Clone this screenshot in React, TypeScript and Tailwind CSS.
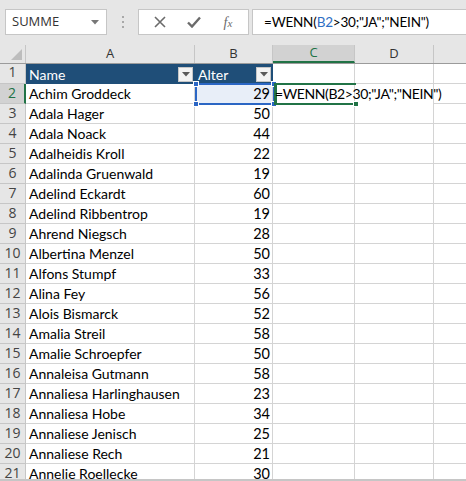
import React from 'react'

const rows: [string, number][] = [
  ['Achim Groddeck', 29],
  ['Adala Hager', 50],
  ['Adala Noack', 44],
  ['Adalheidis Kroll', 22],
  ['Adalinda Gruenwald', 19],
  ['Adelind Eckardt', 60],
  ['Adelind Ribbentrop', 19],
  ['Ahrend Niegsch', 28],
  ['Albertina Menzel', 50],
  ['Alfons Stumpf', 33],
  ['Alina Fey', 56],
  ['Alois Bismarck', 52],
  ['Amalia Streil', 58],
  ['Amalie Schroepfer', 50],
  ['Annaleisa Gutmann', 58],
  ['Annaliesa Harlinghausen', 23],
  ['Annaliesa Hobe', 34],
  ['Annaliese Jenisch', 25],
  ['Annaliese Rech', 21],
  ['Annelie Roellecke', 30],
]

const cellFont = { fontFamily: 'Lato, "Open Sans", sans-serif' }

function FilterButton() {
  return (
    <div className="flex h-[15px] w-[15px] items-center justify-center border border-[#c6c6c6] bg-[#f3f3f3]">
      <svg width="8" height="5" viewBox="0 0 8 5">
        <path d="M0 0 L8 0 L4 4.5 Z" fill="#5a5a5a" />
      </svg>
    </div>
  )
}

function Handle({ className }: { className: string }) {
  return <div className={`absolute h-[6px] w-[6px] border border-white bg-[#2b66c4] ${className}`} />
}

export default function App() {
  return (
    <div className="relative h-[481px] w-[466px] overflow-hidden bg-white" style={{ fontFamily: '"Segoe UI", "Open Sans", sans-serif' }}>
      {/* formula bar area */}
      <div className="flex h-[45px] items-start bg-[#e6e6e6] pl-[5px] pt-[9px]">
        <div className="flex h-[26px] w-[102px] items-center justify-between border border-[#c6c6c6] bg-white pl-[6px] pr-[7px]">
          <span className="text-[13px] text-[#333]" style={{ fontFamily: '"Open Sans", sans-serif' }}>SUMME</span>
          <svg width="8" height="5" viewBox="0 0 8 5">
            <path d="M0 0 L8 0 L4 4.5 Z" fill="#777" />
          </svg>
        </div>
        <div className="flex h-[26px] w-[31px] flex-col items-center justify-center gap-[3px]">
          <div className="h-[2px] w-[2px] bg-[#a8a8a8]" />
          <div className="h-[2px] w-[2px] bg-[#a8a8a8]" />
          <div className="h-[2px] w-[2px] bg-[#a8a8a8]" />
        </div>
        <div className="flex h-[26px] w-[111px] items-center border border-[#c6c6c6] bg-white">
          <div className="flex w-[40px] justify-center pl-[2px]">
            <svg width="12" height="12" viewBox="0 0 12 12">
              <path d="M1 1 L11 11 M11 1 L1 11" stroke="#6b6b6b" strokeWidth="1.6" />
            </svg>
          </div>
          <div className="flex w-[30px] justify-center">
            <svg width="14" height="12" viewBox="0 0 14 12">
              <path d="M1 6.5 L5 10.5 L13 1.5" stroke="#6b6b6b" strokeWidth="2.4" fill="none" />
            </svg>
          </div>
          <div className="flex w-[38px] justify-center">
            <span className="text-[14px] italic text-[#6b6b6b]" style={{ fontFamily: '"Liberation Serif", serif' }}>
              f<span className="text-[11px]">x</span>
            </span>
          </div>
        </div>
        <div className="ml-[3px] flex h-[26px] flex-1 items-center border border-r-0 border-[#c6c6c6] bg-white pl-[11px]">
          <span className="text-[13.5px] tracking-[-0.2px] text-black" style={cellFont}>
            =WENN(<span className="text-[#2e6fc4]">B2</span>&gt;30;"JA";"NEIN")
          </span>
        </div>
      </div>

      {/* column headers */}
      <div className="flex h-[19px] border-b border-[#9b9b9b] bg-[#e6e6e6] text-[13px] text-[#333]">
        <div className="relative w-[26px] border-r border-[#c6c6c6]">
          <svg className="absolute bottom-[3px] right-[3px]" width="11" height="11" viewBox="0 0 11 11">
            <path d="M11 0 L11 11 L0 11 Z" fill="#bdbdbd" />
          </svg>
        </div>
        <div className="flex w-[169px] items-center justify-center border-r border-[#c6c6c6]">A</div>
        <div className="flex w-[78px] items-center justify-center border-r border-[#c6c6c6]">B</div>
        <div className="flex w-[82px] items-center justify-center border-r border-[#c6c6c6] border-b-2 border-b-[#217346] bg-[#d2d2d2] text-[#217346]">C</div>
        <div className="flex w-[79px] items-center justify-center border-r border-[#c6c6c6]">D</div>
        <div className="flex-1" />
      </div>

      {/* grid */}
      <div className="relative" style={cellFont}>
        {/* header row 1 */}
        <div className="flex h-[20px] text-[14px]">
          <div className="flex w-[26px] items-end justify-center border-r border-b border-[#c6c6c6] bg-[#e6e6e6] pb-[1px] text-[14px] text-[#444]" style={{ fontFamily: '"Open Sans", sans-serif' }}>1</div>
          <div className="flex w-[169px] items-center justify-between bg-[#1f4e78] pl-[3px] pr-[2px] text-white">
            <span>Name</span>
            <FilterButton />
          </div>
          <div className="flex w-[78px] items-center justify-between bg-[#1f4e78] pl-[3px] pr-[2px] text-white">
            <span>Alter</span>
            <FilterButton />
          </div>
          <div className="w-[82px] border-r border-b border-[#d4d4d4]" />
          <div className="w-[79px] border-r border-b border-[#d4d4d4]" />
          <div className="flex-1 border-b border-[#d4d4d4]" />
        </div>

        {rows.map(([name, age], i) => {
          const n = i + 2
          const active = n === 2
          return (
            <div key={n} className="flex h-[20px] text-[14px] leading-[18px] text-black">
              <div
                className={`flex w-[26px] items-end justify-center border-b border-[#c6c6c6] pb-[1px] text-[14px] ${active ? 'border-r-2 border-r-[#217346] bg-[#d2d2d2] text-[#217346]' : 'border-r border-r-[#c6c6c6] bg-[#e6e6e6] text-[#444]'}`}
                style={{ fontFamily: '"Open Sans", sans-serif' }}
              >
                {n}
              </div>
              <div className="flex w-[169px] items-end border-r border-b border-[#d4d4d4] pl-[3px]">{name}</div>
              <div className={`flex w-[78px] items-end justify-end border-r border-b border-[#d4d4d4] pr-[2px] text-[14.5px] ${active ? 'bg-[#e8eef8]' : ''}`}>{age}</div>
              <div className="flex w-[82px] items-end overflow-visible whitespace-nowrap border-r border-b border-[#d4d4d4] pl-[2px]">
                {active && <span className="relative z-10 tracking-[-0.4px]">=WENN(B2&gt;30;"JA";"NEIN")</span>}
              </div>
              <div className={`w-[79px] border-r ${active ? '' : 'border-b'} border-[#d4d4d4]`} />
              <div className="flex-1 border-b border-[#d4d4d4]" />
            </div>
          )
        })}

        {/* B2 reference box */}
        <div className="pointer-events-none absolute left-[195px] top-[19px] h-[22px] w-[80px] border-2 border-[#2b66c4]">
          <Handle className="-left-[4px] -top-[4px]" />
          <Handle className="-right-[4px] -top-[4px]" />
          <Handle className="-left-[4px] -bottom-[4px]" />
          <Handle className="-right-[4px] -bottom-[4px]" />
        </div>
        {/* C2 active cell */}
        <div className="pointer-events-none absolute left-[274px] top-[19px] h-[22px] w-[82px] border-2 border-l-[3px] border-[#217346] border-r-0">
          <div className="absolute -bottom-[4px] -right-[3px] h-[6px] w-[6px] border border-white bg-[#217346]" />
        </div>
      </div>

      {/* bottom scrollbar edge */}
      <div className="absolute bottom-0 left-0 h-[2px] w-full bg-[#c6c6c6]" />
    </div>
  )
}
